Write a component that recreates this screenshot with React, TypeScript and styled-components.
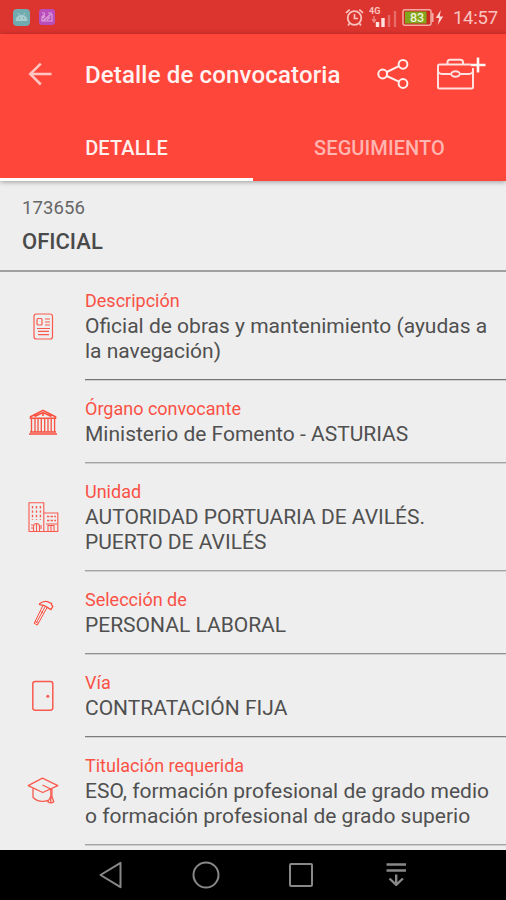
import React from "react";
import styled, { createGlobalStyle } from "styled-components";

const GlobalStyle = createGlobalStyle`
  * { box-sizing: border-box; }
  body { margin: 0; background: #eeeeee; font-family: Roboto, sans-serif; }
`;

const Screen = styled.div`
  width: 506px;
  height: 900px;
  display: flex;
  flex-direction: column;
  overflow: hidden;
  background: #eeeeee;
`;

const StatusBar = styled.div`
  flex: 0 0 34px;
  display: flex;
  align-items: center;
  justify-content: space-between;
  padding: 0 8px 0 13px;
  background: #dc342f;
  color: #f9c4c0;
`;

const StatusGroup = styled.div<{ $gap: number }>`
  display: flex;
  align-items: center;
  gap: ${(p) => p.$gap}px;
`;

const Clock = styled.span`
  margin-left: 4px;
  padding-top: 2px;
  font-size: 18.5px;
  line-height: 22px;
  letter-spacing: -0.2px;
`;

const Header = styled.header`
  flex: 0 0 147px;
  display: flex;
  flex-direction: column;
  background: #ff463b;
  box-shadow: 0 1px 5px rgba(0, 0, 0, 0.35);
  z-index: 1;
`;

const Toolbar = styled.div`
  flex: 0 0 80px;
  display: flex;
  align-items: center;
  padding: 0 20px 0 27px;
`;

const Title = styled.h1`
  flex: 1;
  margin: 2px 0 0 32px;
  color: #fff3f2;
  font-size: 24px;
  font-weight: 500;
  line-height: 30px;
  letter-spacing: 0.16px;
  white-space: nowrap;
`;

const Actions = styled.div`
  display: flex;
  align-items: center;
  gap: 27px;
`;

const Tabs = styled.nav`
  flex: 1;
  display: flex;
`;

const Tab = styled.div<{ $active?: boolean }>`
  flex: 1;
  display: flex;
  align-items: center;
  justify-content: center;
  border-bottom: 3px solid ${(p) => (p.$active ? "#ffffff" : "transparent")};
  color: ${(p) => (p.$active ? "#fff0ee" : "#ffb5b0")};
  font-size: 20px;
  font-weight: 500;
  letter-spacing: ${(p) => (p.$active ? "0.1px" : "0.1px")};
  padding-top: 3px;
`;

const Summary = styled.section`
  flex: 0 0 91px;
  padding: 15px 22px 0;
  border-bottom: 2px solid #a0a0a0;
  color: #4a4a4a;
`;

const Code = styled.div`
  font-size: 18.5px;
  line-height: 24px;
  letter-spacing: 0.1px;
  color: #666666;
`;

const Position = styled.div`
  margin-top: 8px;
  font-size: 22px;
  line-height: 28px;
  font-weight: 500;
`;

const List = styled.main`
  flex: 1;
  min-height: 0;
  overflow: hidden;
`;

const Row = styled.div`
  display: grid;
  grid-template-columns: 85px 1fr;
`;

const IconCell = styled.div`
  display: flex;
  align-items: center;
  justify-content: center;
  svg { display: block; }
`;

const Body = styled.div<{ $line: string }>`
  padding: 16px 0 15px;
  border-bottom: 1px solid ${(p) => p.$line};
  box-shadow: 0 1px 0 #cfcfcf;
`;

const Label = styled.div<{ $spacing: number }>`
  margin-bottom: 1px;
  font-size: 18px;
  line-height: 25px;
  letter-spacing: ${(p) => p.$spacing}px;
  color: #fb5145;
`;

const Line = styled.div<{ $spacing: number }>`
  font-size: 21px;
  line-height: 25px;
  letter-spacing: ${(p) => p.$spacing}px;
  color: #505050;
  white-space: nowrap;
`;

const NavBar = styled.footer`
  flex: 0 0 50px;
  display: flex;
  align-items: center;
  justify-content: space-between;
  padding: 0 95px 0 96px;
  background: #000000;
`;

const red = "#fa5a4e";

const DocumentIcon = () => (
  <svg width="30" height="30" viewBox="0 0 30 30" fill="none" stroke={red} strokeWidth="1.2">
    <rect x="6" y="3" width="18.5" height="25" rx="2.3" />
    <rect x="9" y="7.5" width="5" height="6.5" rx="1" />
    <path d="M17 8h5M17 11h5M17 14h5M9 17.5h13M10 20.3h11M10 23.7h11" />
  </svg>
);

const BankIcon = () => (
  <svg width="32" height="30" viewBox="0 0 32 30" fill="none" stroke="#f9503f" strokeWidth="1.6">
    <path d="M3.5 9.7 16 3.4l12.5 6.3v1.5h-25zM7.5 9.5 16 5.6l8.5 3.9M16 6.5v2.5" />
    <path d="M4.5 12v13M8 12v13M11 12v13M14.3 12v13M17.7 12v13M21 12v13M24.2 12v13M27.6 12v13" strokeWidth="1.3" />
    <path d="M2 27h28M3 25h26" />
  </svg>
);

const BuildingIcon = () => (
  <svg width="32" height="32" viewBox="0 0 32 32" fill="none" stroke={red} strokeWidth="1.1">
    <path d="M2 30.5V1.8h14.8v28.7M16.8 12h14v18.5H1.5" />
    <path d="M5.5 5v14M9.5 5v14M13.4 5v14" strokeDasharray="2.4 2" strokeWidth="1.4" />
    <path d="M20 15.5h9M20 19.5h9" strokeDasharray="2.4 1.2" strokeWidth="1.3" />
    <path d="M6.5 30v-4.5q0-3 3-3t3 3V30M9.5 23v7M21 30v-5.5h6V30M24 24.5V30M4 27h2M4 24h2M14 24v4M19 23h11" />
  </svg>
);

const HammerIcon = () => (
  <svg width="32" height="32" viewBox="0 0 32 32" fill="none" stroke="#fb5040" strokeWidth="1.3" strokeLinejoin="round">
    <path d="M12.5 6.8c3-2.5 7-3 10-1.2l2 .8.4 2.2 1 .9-2 3.1-5.2-3.2-3-1.2-3.2-.6z" />
    <path d="m16 8.3-8.8 18 3.1 1.8L20 10.6M13.5 14.5l2.8 1.5M17.8 10.2l-8.3 15.3M8 24.5l3 1.7" strokeWidth="1" />
  </svg>
);

const DoorIcon = () => (
  <svg width="32" height="32" viewBox="0 0 32 32" fill="none" stroke={red} strokeWidth="1.5">
    <rect x="5.8" y="1.6" width="20" height="28.6" rx="2.4" />
    <circle cx="20.8" cy="16.2" r="1.5" fill={red} stroke="none" />
  </svg>
);

const CapIcon = () => (
  <svg width="34" height="30" viewBox="0 0 34 30" fill="none" stroke={red} strokeWidth="1.3" strokeLinejoin="round">
    <path d="m2.2 9.7 14.3-7.5 15.3 7.5-15.1 6.8zM16.5 9l8.3 4v9" />
    <path d="M7 12.3v9q3.8 4.1 9.3 4.1 3.2 0 5.7-1.1M24.8 13l1.3 1.3M24.8 20.5l-3 5.2q3.3 2.4 6 0l-1.9-5.2v-8M24.8 21v6" />
  </svg>
);

const rows = [
  { icon: <DocumentIcon />, label: "Descripción", ls: 0, line: "#747474",
    values: [["Oficial de obras y mantenimiento (ayudas a", 0], ["la navegación)", 0]] },
  { icon: <BankIcon />, label: "Órgano convocante", ls: 0, line: "#a4a4a4",
    values: [["Ministerio de Fomento - ASTURIAS", 0]] },
  { icon: <BuildingIcon />, label: "Unidad", ls: 0, line: "#a4a4a4",
    values: [["AUTORIDAD PORTUARIA DE AVILÉS.", 0], ["PUERTO DE AVILÉS", 0]] },
  { icon: <HammerIcon />, label: "Selección de", ls: 0, line: "#909090",
    values: [["PERSONAL LABORAL", 0]] },
  { icon: <DoorIcon />, label: "Vía", ls: 0, line: "#7c7c7c",
    values: [["CONTRATACIÓN FIJA", 0]] },
  { icon: <CapIcon />, label: "Titulación requerida", ls: 0, line: "#a4a4a4",
    values: [["ESO, formación profesional de grado medio", 0], ["o formación profesional de grado superio", 0]] },
] as { icon: React.ReactNode; label: string; ls: number; line: string; values: [string, number][] }[];

const AndroidBadge = () => (
  <svg width="17" height="17" viewBox="0 0 17 17">
    <rect width="17" height="17" rx="4" fill="#6fabaf" />
    <path d="M3 11.5C3 4.5 14 4.5 14 11.5zM5 4l1.5 2M12 4l-1.5 2" fill="#a9cccd" stroke="#a9cccd" />
    <path d="M6 9h1M10 9h1" stroke="#5d9b9f" strokeWidth="1.2" />
  </svg>
);

const ImageBadge = () => (
  <svg width="16" height="16" viewBox="0 0 16 16">
    <rect width="16" height="16" rx="3" fill="#b94dbb" />
    <path d="M3 4h3M9 4h4M3 12V8l3-3M13 5v7H4l8-7M4 9l2-2M8 11l3-3" fill="none" stroke="#dda0dc" strokeWidth="1.2" />
  </svg>
);

const AlarmIcon = () => (
  <svg width="19" height="19" viewBox="0 0 19 19" fill="none" stroke="#f9c4c0" strokeWidth="1.7">
    <circle cx="9.5" cy="10" r="6.8" />
    <path d="M9.5 6v4.5H13M1 4.8l3.7-3.2M18 4.8l-3.7-3.2M4.5 15.5 3 17.5M14.5 15.5l1.5 2" />
  </svg>
);

const SignalIcon = () => (
  <svg width="28" height="24" viewBox="0 0 28 24">
    <text x="0" y="8.5" fontFamily="Roboto" fontSize="9" fontWeight="700" fill="#f9c4c0">4G</text>
    <path d="M5 11v6M3 14l2 3 2-3" fill="none" stroke="#ef8d89" strokeWidth="1.3" />
    <path d="M8.5 17v5M14 13v9" stroke="#ffe1df" strokeWidth="3.4" />
    <path d="M20 10v12M26 6v16" stroke="#e76b66" strokeWidth="2.4" />
  </svg>
);

const BatteryIcon = () => (
  <svg width="42" height="19" viewBox="0 0 42 19">
    <rect x="1" y="1.7" width="28" height="15.6" rx="2" fill="#c9291f" stroke="#f6aaa5" strokeWidth="1.5" />
    <rect x="3" y="3.5" width="21.5" height="12" fill="#81a51d" />
    <path d="M30.5 5v9" stroke="#f6aaa5" strokeWidth="2" />
    <text x="8" y="14" fontFamily="Roboto" fontSize="12.5" fontWeight="500" fill="#eef3d6">83</text>
    <path d="m38.8 2-5 8h3.4l-1.5 7 5.5-8.5h-3.5z" fill="#ffd5d2" />
  </svg>
);

const BackIcon = () => (
  <svg width="26" height="26" viewBox="0 0 26 26" fill="none" stroke="#ffc7c3" strokeWidth="2.5">
    <path d="M24.5 13H4M13.8 2.7 3.2 13l10.6 10.5" />
  </svg>
);

const ShareIcon = () => (
  <svg width="32" height="32" viewBox="0 0 32 32" fill="none" stroke="#fff0ee" strokeWidth="2">
    <circle cx="5.7" cy="16" r="4.4" />
    <circle cx="26" cy="6.3" r="4.4" />
    <circle cx="26" cy="25.5" r="4.4" />
    <path d="m9.7 14 12.3-5.8M9.7 18 22 23.7" />
  </svg>
);

const BriefcaseIcon = () => (
  <svg width="50" height="34" viewBox="0 0 50 34" fill="none" stroke="#ffe2df" strokeWidth="2">
    <rect x="2" y="7.5" width="35" height="24" rx="1.5" />
    <path d="M11.5 7V5.2q0-2.5 2.5-2.5h10.5q2.5 0 2.5 2.5V7M2 14.5q1 2.5 4.5 2.5h8.3M37 14.5q-1 2.5-4.5 2.5h-8.2" />
    <ellipse cx="19.5" cy="17" rx="4.3" ry="2.7" />
    <path d="M42 .5v15M34.7 8h14.8" stroke="#ff463b" strokeWidth="6" />
    <path d="M42 .5v15M34.7 8h14.8" stroke="#fff7f6" strokeWidth="2.6" />
  </svg>
);

const NavIcon = ({ children }: { children: React.ReactNode }) => (
  <svg width="30" height="30" viewBox="0 0 30 30" fill="none" stroke="#888888" strokeWidth="2" strokeLinejoin="round">
    {children}
  </svg>
);

export default function App() {
  return (
    <>
      <GlobalStyle />
      <Screen>
        <StatusBar>
          <StatusGroup $gap={9}>
            <AndroidBadge />
            <ImageBadge />
          </StatusGroup>
          <StatusGroup $gap={5}>
            <AlarmIcon />
            <SignalIcon />
            <BatteryIcon />
            <Clock>14:57</Clock>
          </StatusGroup>
        </StatusBar>
        <Header>
          <Toolbar>
            <BackIcon />
            <Title>Detalle de convocatoria</Title>
            <Actions>
              <ShareIcon />
              <BriefcaseIcon />
            </Actions>
          </Toolbar>
          <Tabs>
            <Tab $active>DETALLE</Tab>
            <Tab>SEGUIMIENTO</Tab>
          </Tabs>
        </Header>
        <Summary>
          <Code>173656</Code>
          <Position>OFICIAL</Position>
        </Summary>
        <List>
          {rows.map((row) => (
            <Row key={row.label}>
              <IconCell>{row.icon}</IconCell>
              <Body $line={row.line}>
                <Label $spacing={row.ls}>{row.label}</Label>
                {row.values.map(([text, spacing]) => (
                  <Line key={text} $spacing={spacing}>{text}</Line>
                ))}
              </Body>
            </Row>
          ))}
        </List>
        <NavBar>
          <NavIcon><path d="M4.5 15 24.5 2.8v24.4z" /></NavIcon>
          <NavIcon><circle cx="15" cy="15" r="12.5" /></NavIcon>
          <NavIcon><rect x="4" y="4" width="22" height="22" rx="1" /></NavIcon>
          <NavIcon><path d="M5.5 4.5h19.5M5.5 10.5h19.5M15.2 14.5v10M8.5 18.5l6.7 6.3 6.7-6.3" strokeWidth="2.4" /></NavIcon>
        </NavBar>
      </Screen>
    </>
  );
}
